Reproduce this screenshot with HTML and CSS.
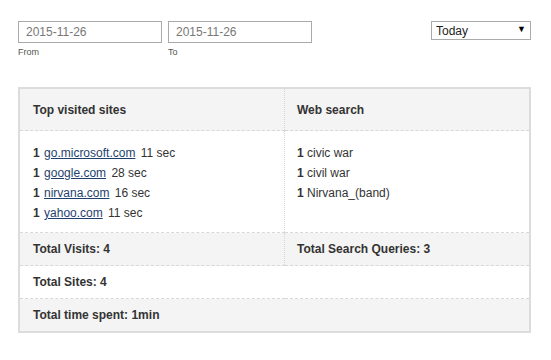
FILE: index.html
```html
<!DOCTYPE html>
<html lang="en">
<head>
  <meta charset="UTF-8">
  <title>Browsing Report</title>
  <link rel="stylesheet" href="styles.css">
</head>
<body>
  <main class="page">
    <div class="filters">
      <div class="dates">
        <div class="date-field">
          <input type="text" class="date-input" value="2015-11-26">
          <label>From</label>
        </div>
        <div class="date-field">
          <input type="text" class="date-input" value="2015-11-26">
          <label>To</label>
        </div>
      </div>
      <div class="range-select">
        <select>
          <option>Today</option>
          <option>Yesterday</option>
          <option>Last 7 days</option>
        </select>
      </div>
    </div>

    <table class="report">
      <tr class="head">
        <th class="left">Top visited sites</th>
        <th>Web search</th>
      </tr>
      <tr class="body">
        <td class="left">
          <ul class="list">
            <li><b>1</b> <a href="#">go.microsoft.com</a> <span class="time">11 sec</span></li>
            <li><b>1</b> <a href="#">google.com</a> <span class="time">28 sec</span></li>
            <li><b>1</b> <a href="#">nirvana.com</a> <span class="time">16 sec</span></li>
            <li><b>1</b> <a href="#">yahoo.com</a> <span class="time">11 sec</span></li>
          </ul>
        </td>
        <td>
          <ul class="list">
            <li><b>1</b> civic war</li>
            <li><b>1</b> civil war</li>
            <li><b>1</b> Nirvana_(band)</li>
          </ul>
        </td>
      </tr>
      <tr class="total shaded">
        <td class="left">Total Visits: 4</td>
        <td>Total Search Queries: 3</td>
      </tr>
      <tr class="total">
        <td colspan="2">Total Sites: 4</td>
      </tr>
      <tr class="total shaded last">
        <td colspan="2">Total time spent: 1min</td>
      </tr>
    </table>
  </main>
</body>
</html>
```

FILE: styles.css
```css
body {
  margin: 0;
  padding: 0;
  background-color: #fff;
  color: #333;
  font-family: "Liberation Sans", Arial, sans-serif;
  font-size: 12px;
}

.page {
  padding: 21px 20px 0 18px;
}

.filters {
  display: flex;
  justify-content: space-between;
  align-items: flex-start;
}

.dates {
  display: flex;
  gap: 6px;
}

.date-field {
  display: flex;
  flex-direction: column;
}

.date-input {
  box-sizing: border-box;
  width: 144px;
  height: 22px;
  margin: 0;
  padding: 0 7px;
  border: 1px solid #aaa;
  font-family: inherit;
  font-size: 12px;
  color: #777;
  outline: none;
}

.date-field label {
  margin-top: 4px;
  font-size: 9px;
  color: #555;
}

.range-select {
  position: relative;
}

.range-select select {
  box-sizing: border-box;
  width: 100px;
  height: 19px;
  margin: 0;
  padding: 0 0 0 4px;
  border: 1px solid #aaa;
  background: #fff;
  font-family: inherit;
  font-size: 12px;
  color: #222;
  appearance: none;
  -webkit-appearance: none;
}

.range-select::after {
  content: "\25BC";
  position: absolute;
  right: 5px;
  top: 3px;
  font-size: 9px;
  color: #000;
  pointer-events: none;
}

.report {
  width: 513px;
  margin-top: 30px;
  border-collapse: collapse;
  border: 2px solid #dcdcdc;
}

.report th,
.report td {
  text-align: left;
  vertical-align: top;
  padding: 0 12px;
}

.report .left {
  width: 239px;
  padding-left: 13px;
  border-right: 1px dotted #d4d4d4;
}

.head th {
  height: 41px;
  vertical-align: middle;
  background-color: #f4f4f4;
  border-bottom: 1px dashed #d8d8d8;
}

.body td {
  padding-top: 12px;
  padding-bottom: 9px;
  border-bottom: 1px dashed #d8d8d8;
}

.list {
  list-style: none;
  margin: 0;
  padding: 0;
}

.list li {
  line-height: 20px;
}

.list a {
  color: #1f3f6e;
  margin: 0 2px 0 1px;
}

.total td {
  height: 32px;
  vertical-align: middle;
  font-weight: bold;
  border-bottom: 1px dashed #d8d8d8;
}

.total td[colspan] {
  padding-left: 13px;
}

.total.shaded td {
  background-color: #f4f4f4;
}

.total.last td {
  border-bottom: none;
}
```
